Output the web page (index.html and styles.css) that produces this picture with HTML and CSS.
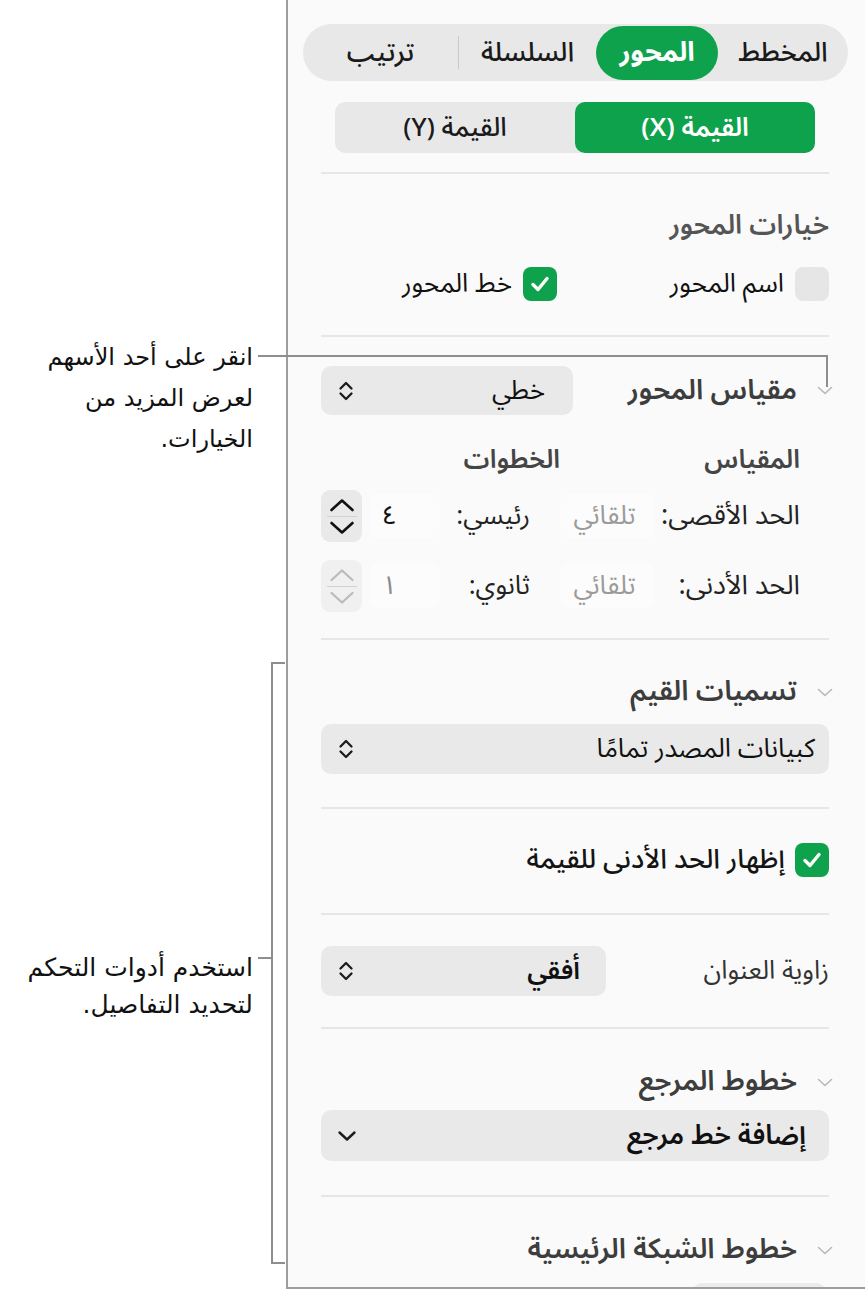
FILE: index.html
```html
<!DOCTYPE html>
<html lang="ar">
<head>
<meta charset="utf-8">
<title>Axis inspector</title>
<link rel="stylesheet" href="styles.css">
</head>
<body>
<div class="page">
  <div class="notes">
    <div class="note note-1"><span class="ln">انقر على أحد الأسهم</span><span class="ln">لعرض المزيد من</span><span class="ln">الخيارات.</span></div>
    <div class="lead lead-1h"></div>
    <div class="lead lead-1v"></div>
    <div class="note note-2"><span class="ln">استخدم أدوات التحكم</span><span class="ln">لتحديد التفاصيل.</span></div>
    <div class="bracket"></div>
    <div class="lead lead-2h"></div>
  </div>

  <aside class="panel" dir="rtl">
    <section class="sec sec-top">
      <div class="tabs">
        <div class="tab t1">المخطط</div>
        <div class="tab t2 active">المحور</div>
        <div class="tab t3">السلسلة</div>
        <div class="tab-div"></div>
        <div class="tab t4">ترتيب</div>
      </div>
      <div class="seg">
        <div class="seg-item active">القيمة (X)</div>
        <div class="seg-item">القيمة (Y)</div>
      </div>
    </section>

    <section class="sec sec-opts">
      <h3 class="head">خيارات المحور</h3>
      <div class="checks">
        <label class="check c1"><span class="box"></span><span>اسم المحور</span></label>
        <label class="check"><span class="box on"><svg viewBox="0 0 26 26" width="26" height="26"><path d="M6 13.5 L11 18.5 L20 7.5" fill="none" stroke="#fff" stroke-width="3.4" stroke-linecap="round" stroke-linejoin="round"/></svg></span><span>خط المحور</span></label>
      </div>
    </section>

    <section class="sec sec-scale">
      <div class="row-head">
        <div class="disc-title"><svg class="disc" viewBox="0 0 16 9" width="16" height="9"><path d="M1.5 1.5 L8 7.5 L14.5 1.5" fill="none" stroke="#b8b8b8" stroke-width="1.6" stroke-linecap="round" stroke-linejoin="round"/></svg><span class="head-b">مقياس المحور</span></div>
        <div class="popup pop-scale"><span class="pop-text">خطي</span><svg class="updown" viewBox="0 0 16 24" width="16" height="24"><path d="M2.5 9.5 L8 4 L13.5 9.5 M2.5 14.5 L8 20 L13.5 14.5" fill="none" stroke="#1c1c1c" stroke-width="2.3" stroke-linecap="round" stroke-linejoin="round"/></svg></div>
      </div>
      <div class="cols">
        <span class="col-a">المقياس</span>
        <span class="col-b">الخطوات</span>
      </div>
      <div class="grid-row">
        <span class="lbl">الحد الأقصى:</span>
        <span class="fld auto">تلقائي</span>
        <span class="lbl2">رئيسي:</span>
        <span class="fld num">٤</span>
        <span class="stepper"><svg viewBox="0 0 26 14" width="26" height="14"><path d="M2.5 12 L13 2.5 L23.5 12" fill="none" stroke="#111" stroke-width="2.6" stroke-linecap="round" stroke-linejoin="round"/></svg><i class="step-line"></i><svg viewBox="0 0 26 14" width="26" height="14"><path d="M2.5 2 L13 11.5 L23.5 2" fill="none" stroke="#111" stroke-width="2.6" stroke-linecap="round" stroke-linejoin="round"/></svg></span>
      </div>
      <div class="grid-row">
        <span class="lbl">الحد الأدنى:</span>
        <span class="fld auto">تلقائي</span>
        <span class="lbl2">ثانوي:</span>
        <span class="fld num dim">١</span>
        <span class="stepper off"><svg viewBox="0 0 26 14" width="26" height="14"><path d="M2.5 12 L13 2.5 L23.5 12" fill="none" stroke="#bababa" stroke-width="2.2" stroke-linecap="round" stroke-linejoin="round"/></svg><i class="step-line"></i><svg viewBox="0 0 26 14" width="26" height="14"><path d="M2.5 2 L13 11.5 L23.5 2" fill="none" stroke="#bababa" stroke-width="2.2" stroke-linecap="round" stroke-linejoin="round"/></svg></span>
      </div>
    </section>

    <section class="sec sec-labels">
      <div class="disc-title"><svg class="disc" viewBox="0 0 16 9" width="16" height="9"><path d="M1.5 1.5 L8 7.5 L14.5 1.5" fill="none" stroke="#b8b8b8" stroke-width="1.6" stroke-linecap="round" stroke-linejoin="round"/></svg><span class="head-b">تسميات القيم</span></div>
      <div class="popup pop-full"><span class="pop-text">كبيانات المصدر تمامًا</span><svg class="updown" viewBox="0 0 16 24" width="16" height="24"><path d="M2.5 9.5 L8 4 L13.5 9.5 M2.5 14.5 L8 20 L13.5 14.5" fill="none" stroke="#1c1c1c" stroke-width="2.3" stroke-linecap="round" stroke-linejoin="round"/></svg></div>
    </section>

    <section class="sec sec-min">
      <label class="check"><span class="box on"><svg viewBox="0 0 26 26" width="26" height="26"><path d="M6 13.5 L11 18.5 L20 7.5" fill="none" stroke="#fff" stroke-width="3.4" stroke-linecap="round" stroke-linejoin="round"/></svg></span><span class="strong">إظهار الحد الأدنى للقيمة</span></label>
    </section>

    <section class="sec sec-angle">
      <span class="plain">زاوية العنوان</span>
      <div class="popup pop-angle"><span class="pop-text b">أفقي</span><svg class="updown" viewBox="0 0 16 24" width="16" height="24"><path d="M2.5 9.5 L8 4 L13.5 9.5 M2.5 14.5 L8 20 L13.5 14.5" fill="none" stroke="#1c1c1c" stroke-width="2.3" stroke-linecap="round" stroke-linejoin="round"/></svg></div>
    </section>

    <section class="sec sec-ref">
      <div class="disc-title"><svg class="disc" viewBox="0 0 16 9" width="16" height="9"><path d="M1.5 1.5 L8 7.5 L14.5 1.5" fill="none" stroke="#b8b8b8" stroke-width="1.6" stroke-linecap="round" stroke-linejoin="round"/></svg><span class="head-b">خطوط المرجع</span></div>
      <div class="popup pop-full pop-add"><span class="pop-text b">إضافة خط مرجع</span><svg class="down" viewBox="0 0 20 12" width="20" height="12"><path d="M2.5 2.5 L10 9.5 L17.5 2.5" fill="none" stroke="#1c1c1c" stroke-width="2.4" stroke-linecap="round" stroke-linejoin="round"/></svg></div>
    </section>

    <section class="sec sec-grid">
      <div class="disc-title"><svg class="disc" viewBox="0 0 16 9" width="16" height="9"><path d="M1.5 1.5 L8 7.5 L14.5 1.5" fill="none" stroke="#b8b8b8" stroke-width="1.6" stroke-linecap="round" stroke-linejoin="round"/></svg><span class="head-b">خطوط الشبكة الرئيسية</span></div>
      <div class="peek"></div>
    </section>
  </aside>
</div>
</body>
</html>
```

FILE: styles.css
```css
* { box-sizing: border-box; }

html, body {
  margin: 0;
  padding: 0;
  background: #ffffff;
}

body {
  font-family: "Noto Sans Arabic", "DejaVu Sans", "Noto Sans", sans-serif;
  color: #1b1b1b;
  font-size: 26px;
  line-height: 30px;
}

.page {
  position: relative;
  width: 865px;
  height: 1292px;
  display: flex;
}

/* ---------- callouts ---------- */
.notes {
  position: relative;
  width: 286px;
  flex: none;
}

.note {
  position: absolute;
  right: 33px;
  width: 280px;
  text-align: right;
  direction: rtl;
  font-family: "DejaVu Sans", "Noto Sans Arabic", sans-serif;
  font-size: 24px;
  color: #111;
}

.ln {
  display: block;
  height: 41px;
  line-height: 41px;
  white-space: nowrap;
}

.note-1 { top: 337px; }
.note-2 { top: 949px; }
.note-2 .ln { height: 37px; line-height: 37px; font-size: 25px; }

.lead {
  position: absolute;
  background: #8e8e8e;
  z-index: 5;
}

.lead-1h { left: 258px; top: 355px; width: 570px; height: 2px; }
.lead-1v { left: 826px; top: 355px; width: 2px; height: 32px; }

.bracket {
  position: absolute;
  left: 271px;
  top: 662px;
  width: 14px;
  height: 602px;
  border: 2px solid #8e8e8e;
  border-right: none;
}

.lead-2h { left: 258px; top: 957px; width: 14px; height: 2px; }

/* ---------- panel ---------- */
.panel {
  width: 579px;
  height: 1289px;
  flex: none;
  background: #fafafa;
  border-left: 2px solid #9d9d9d;
  border-bottom: 2px solid #9d9d9d;
  overflow: hidden;
}

.sec {
  margin: 0 36px 0 33px;
  padding: 0;
  border-bottom: 2px solid #e6e6e6;
}

/* top tabs */
.sec-top {
  padding-top: 24px;
  padding-bottom: 19px;
  display: flex;
  flex-direction: column;
  gap: 21px;
}

.tabs {
  height: 57px;
  margin: 0 -19px 0 -18px;
  background: #e8e8e8;
  border-radius: 29px;
  display: flex;
  align-items: center;
}

.tab {
  height: 54px;
  display: flex;
  align-items: center;
  justify-content: center;
  font-size: 27px;
  font-weight: 500;
  color: #1a1a1a;
  flex: none;
}

.t1 { width: 130px; }
.t2 { width: 122px; }
.t3 { width: 137px; }
.t4 { width: 155px; }

.tab.active {
  background: #0fa24d;
  color: #fff;
  font-weight: bold;
  border-radius: 27px;
}

.tab-div {
  width: 1px;
  height: 33px;
  background: #c9c9c9;
  flex: none;
}

.seg {
  height: 51px;
  margin: 0 14px;
  background: #e8e8e8;
  border-radius: 10px;
  display: flex;
}

.seg-item {
  flex: 1;
  display: flex;
  align-items: center;
  justify-content: center;
  font-size: 26px;
  font-weight: 500;
  color: #1a1a1a;
}

.seg-item.active {
  background: #0fa24d;
  color: #fff;
  border-radius: 10px;
  font-weight: 600;
}

/* headings */
.head {
  margin: 0;
  height: 30px;
  line-height: 30px;
  font-size: 27px;
  font-weight: 600;
  color: #555;
}

.head-b {
  font-size: 28px;
  font-weight: 600;
  color: #3d3d3d;
}

.disc-title {
  height: 30px;
  display: flex;
  align-items: center;
  gap: 20px;
  margin-right: -4px;
}

.disc { flex: none; }

/* options section */
.sec-opts {
  padding-top: 37px;
  padding-bottom: 34px;
  display: flex;
  flex-direction: column;
  gap: 26px;
}

.checks {
  display: flex;
  height: 34px;
  align-items: center;
}

.check {
  display: flex;
  align-items: center;
  gap: 11px;
  font-size: 26px;
  color: #111;
}

.check.c1 { width: 272px; }

.box {
  width: 34px;
  height: 34px;
  border-radius: 8px;
  background: #e6e6e6;
  display: flex;
  align-items: center;
  justify-content: center;
  flex: none;
}

.box.on { background: #0fa24d; }

.strong { font-weight: 500; font-size: 27px; color: #141414; }

/* scale section */
.sec-scale {
  padding-top: 29px;
  padding-bottom: 28px;
}

.row-head {
  height: 49px;
  display: flex;
  align-items: center;
  justify-content: space-between;
}

.popup {
  height: 49px;
  border-radius: 10px;
  background: #e9e9e9;
  display: flex;
  align-items: center;
  justify-content: space-between;
  font-size: 26px;
  color: #111;
}

.pop-text.b { font-weight: 600; }

.updown, .down { flex: none; }

.pop-scale {
  width: 252px;
  padding: 0 28px 0 17px;
}

.cols {
  margin-top: 31px;
  height: 28px;
  display: flex;
  align-items: center;
  padding-right: 29px;
  font-size: 26px;
  font-weight: 600;
  color: #454545;
}

.col-a { width: 240px; }

.grid-row {
  height: 50px;
  display: grid;
  grid-template-columns: 145px 95px 120px 70px 8px 41px;
  padding-right: 29px;
  align-items: center;
  font-size: 26px;
  color: #222;
  margin-top: 16px;
  white-space: nowrap;
}

.grid-row + .grid-row { margin-top: 20px; }

.lbl { grid-column: 1; font-size: 27px; }

.fld {
  height: 44px;
  border-radius: 8px;
  background: #fcfcfc;
  display: flex;
  align-items: center;
}

.fld.auto {
  justify-content: center;
  color: #9b9b9b;
  padding-right: 6px;
}

.lbl2 { padding-right: 30px; }

.fld.num {
  direction: ltr;
  justify-content: flex-start;
  padding-left: 12px;
  color: #111;
}

.fld.num.dim { color: #8a8a8a; }

.stepper {
  grid-column: 6;
  height: 52px;
  border-radius: 9px;
  background: #e9e9e9;
  display: flex;
  flex-direction: column;
  align-items: center;
  justify-content: center;
  gap: 4px;
}

.stepper.off { background: #f0f0f0; }

.step-line {
  display: block;
  width: 30px;
  height: 1px;
  background: #d2d2d2;
}

/* value labels */
.sec-labels {
  padding-top: 37px;
  padding-bottom: 33px;
  display: flex;
  flex-direction: column;
  gap: 17px;
}

.pop-full {
  height: 50px;
  padding: 0 14px 0 17px;
}

/* min checkbox */
.sec-min {
  padding-top: 34px;
  padding-bottom: 36px;
}

.sec-min .check { height: 34px; gap: 10px; }

/* angle */
.sec-angle {
  padding-top: 31px;
  padding-bottom: 31px;
  display: flex;
  align-items: center;
  justify-content: space-between;
}

.plain { font-size: 26px; color: #333; }

.pop-angle {
  width: 285px;
  height: 50px;
  padding: 0 26px 0 17px;
}

/* reference */
.sec-ref {
  padding-top: 38px;
  padding-bottom: 34px;
  display: flex;
  flex-direction: column;
  gap: 13px;
}

.pop-add {
  height: 51px;
  padding: 0 23px 0 16px;
}

.pop-add .pop-text { font-size: 27px; }

/* grid */
.sec-grid {
  border-bottom: none;
  padding-top: 38px;
}

.peek {
  margin-top: 18px;
  margin-right: 3px;
  width: 134px;
  height: 40px;
  border-radius: 10px;
  background: #ebebeb;
}
```
